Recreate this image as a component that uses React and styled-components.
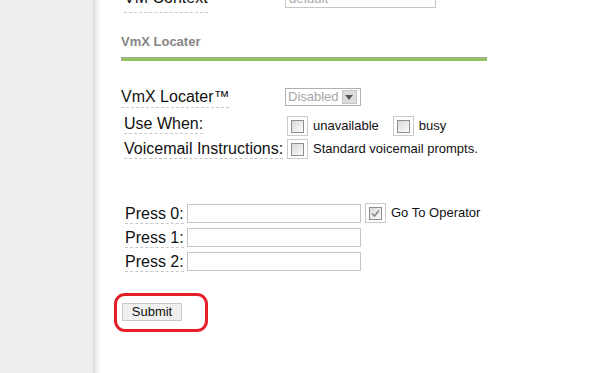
import React from 'react';
import styled, { createGlobalStyle } from 'styled-components';

const Global = createGlobalStyle`
  html, body { margin: 0; padding: 0; background: #eeeeee; }
  body { font-family: "Liberation Sans", Arial, sans-serif; color: #111; overflow: hidden; }
`;

const Page = styled.div`
  display: flex;
  width: 611px;
  height: 373px;
  overflow: hidden;
`;

const Sidebar = styled.div`
  flex: none;
  width: 93px;
  background: #eeeeee;
`;

const Panel = styled.div`
  flex: 1;
  background: linear-gradient(to right, #d6d6d6 0, #ececec 3px, #f8f8f8 6px, #ffffff 9px);
  padding-left: 28px;
`;

const Content = styled.div`
  width: 365px;
  display: flex;
  flex-direction: column;
  align-items: flex-start;
`;

const Row = styled.div`
  display: flex;
  align-items: flex-start;
  margin-top: ${p => p.$mt || 0}px;
`;

const LabelCell = styled.div`
  flex: none;
  width: ${p => p.$w || 164}px;
  padding-left: ${p => p.$indent || 0}px;
  box-sizing: border-box;
`;

const Label = styled.span`
  display: inline-block;
  font-size: 16px;
  line-height: ${p => p.$lh || 18}px;
  padding-bottom: ${p => p.$pb || 0}px;
  border-bottom: 1px dashed #c8c8c8;
  color: #111;
  white-space: nowrap;
`;

const TextBox = styled.div`
  box-sizing: border-box;
  width: ${p => p.$w}px;
  height: 19px;
  border: 1px solid #c6c6c6;
  background: #fff;
  font-size: 13px;
  line-height: 17px;
  padding-left: 3px;
  color: #a8a8a8;
  margin-left: ${p => p.$ml || 0}px;
`;

const Heading = styled.div`
  margin-top: 21px;
  font-size: 13px;
  line-height: 15px;
  font-weight: bold;
  color: #858585;
`;

const GreenBar = styled.div`
  margin-top: 8px;
  width: 365px;
  height: 3px;
  background: #93c55f;
  border-top: 1px solid #a6a6a6;
  border-left: 1px solid #a6a6a6;
  box-sizing: content-box;
`;

const Select = styled.div`
  margin-top: 1px;
  display: flex;
  align-items: center;
  box-sizing: border-box;
  width: 76px;
  height: 18px;
  border: 1px solid #b0b0b0;
  background: #fff;
  padding: 0 1px 0 2px;
  gap: 3px;
`;

const SelectText = styled.span`
  font-size: 13px;
  line-height: 16px;
  color: #a6a6a6;
`;

const SelectArrow = styled.span`
  display: flex;
  align-items: center;
  justify-content: center;
  width: 15px;
  height: 14px;
  background: #dcdcdc;
  border: 1px solid #c4c4c4;
  box-sizing: border-box;
`;

const Options = styled.div`
  display: flex;
  align-items: center;
  margin-top: ${p => p.$mt || 0}px;
  margin-left: ${p => p.$ml || 0}px;
`;

const CheckFrame = styled.span`
  flex: none;
  display: inline-flex;
  align-items: center;
  justify-content: center;
  box-sizing: border-box;
  width: 21px;
  height: 20px;
  border: 1px solid #cacaca;
  background: #fff;
  margin-left: ${p => p.$ml || 0}px;
`;

const CheckInner = styled.span`
  display: flex;
  align-items: center;
  justify-content: center;
  box-sizing: border-box;
  width: 13px;
  height: 13px;
  border: 1px solid #8e8e8e;
  background: linear-gradient(135deg, #d8d8d8 0%, #eeeeee 60%, #fafafa 100%);
`;

const OptText = styled.span`
  font-size: 13px;
  line-height: 16px;
  color: #111;
  margin-left: 5px;
  white-space: nowrap;
`;

const SubmitRing = styled.div`
  margin-top: 21px;
  margin-left: -7px;
  box-sizing: border-box;
  padding: 7px 23px 8px 5px;
  border: 3px solid #e51f28;
  border-radius: 11px;
`;

const Button = styled.button`
  display: block;
  box-sizing: border-box;
  width: 60px;
  height: 18px;
  padding: 0;
  border: 1px solid #c8c8c8;
  background: #f0f0f0;
  font-family: "Liberation Sans", Arial, sans-serif;
  font-size: 13px;
  line-height: 16px;
  color: #111;
`;

function Checkbox({ checked, ml }) {
  return (
    <CheckFrame $ml={ml}>
      <CheckInner>
        {checked && (
          <svg width="9" height="9" viewBox="0 0 9 9">
            <path d="M1 4.5 L3.5 7 L8 1.5" fill="none" stroke="#8a8a8a" strokeWidth="1.6" />
          </svg>
        )}
      </CheckInner>
    </CheckFrame>
  );
}

function PressRow({ n, mt, extra }) {
  return (
    <Row $mt={mt}>
      <LabelCell $w={66} $indent={4}>
        <Label $lh={19}>Press {n}:</Label>
      </LabelCell>
      <TextBox $w={174} />
      {extra}
    </Row>
  );
}

export default function App() {
  return (
    <>
      <Global />
      <Page>
        <Sidebar />
        <Panel>
          <Content>
            <Row $mt={-11}>
              <LabelCell $indent={3}>
                <Label $lh={18} $pb={5}>VM Context</Label>
              </LabelCell>
              <TextBox $w={151}>default</TextBox>
            </Row>

            <Heading>VmX Locater</Heading>
            <GreenBar />

            <Row $mt={26}>
              <LabelCell>
                <Label $lh={19} $pb={1}>VmX Locater™</Label>
              </LabelCell>
              <Select>
                <SelectText>Disabled</SelectText>
                <SelectArrow>
                  <svg width="8" height="5" viewBox="0 0 8 5">
                    <path d="M0 0 H8 L4 5 Z" fill="#555" />
                  </svg>
                </SelectArrow>
              </Select>
            </Row>

            <Row $mt={7}>
              <LabelCell $indent={3}>
                <Label>Use When:</Label>
              </LabelCell>
              <Options $mt={1} $ml={2}>
                <Checkbox />
                <OptText>unavailable</OptText>
                <Checkbox ml={14} />
                <OptText>busy</OptText>
              </Options>
            </Row>

            <Row $mt={4}>
              <LabelCell $indent={3}>
                <Label>Voicemail Instructions:</Label>
              </LabelCell>
              <Options $mt={-1} $ml={2}>
                <Checkbox />
                <OptText>Standard voicemail prompts.</OptText>
              </Options>
            </Row>

            <PressRow
              n={0}
              mt={45}
              extra={
                <Options $ml={4} $mt={-1}>
                  <Checkbox checked />
                  <OptText>Go To Operator</OptText>
                </Options>
              }
            />
            <PressRow n={1} mt={4} />
            <PressRow n={2} mt={4} />

            <SubmitRing>
              <Button type="button">Submit</Button>
            </SubmitRing>
          </Content>
        </Panel>
      </Page>
    </>
  );
}
